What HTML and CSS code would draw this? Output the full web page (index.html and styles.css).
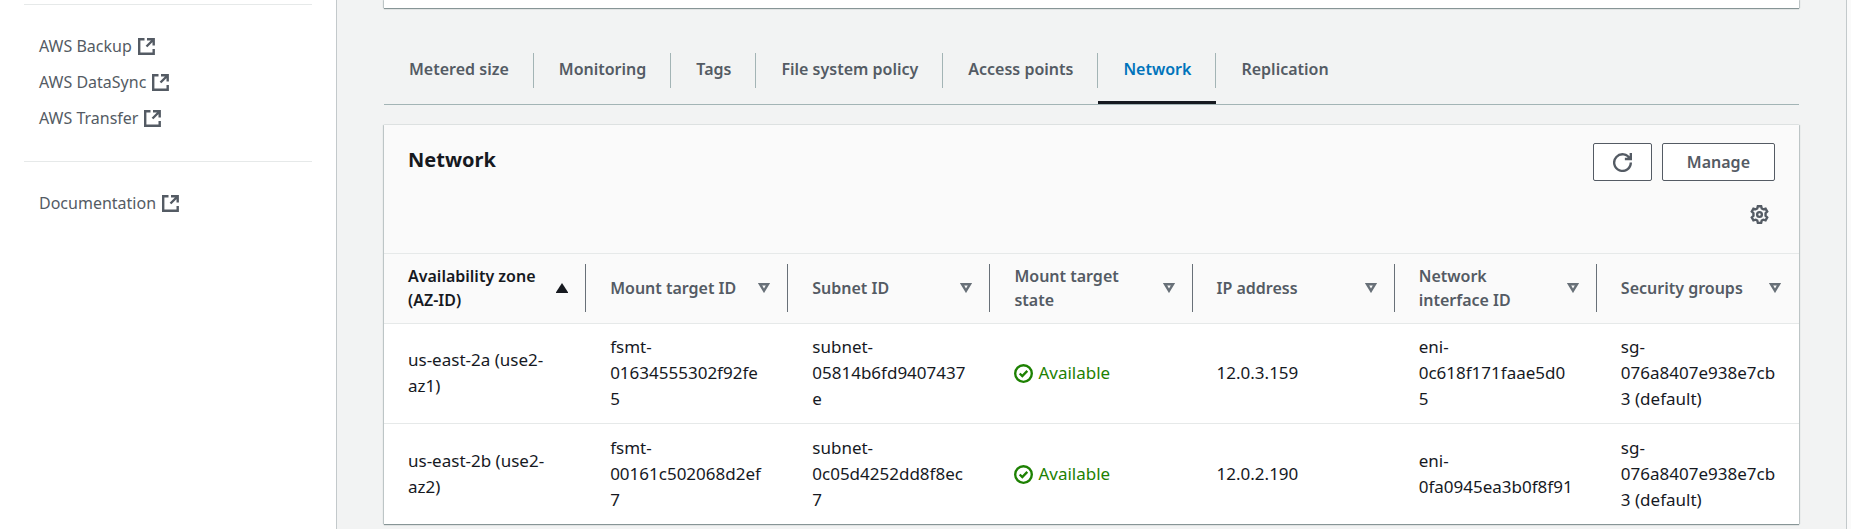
FILE: index.html
```html
<!DOCTYPE html>
<html lang="en">
<head>
<meta charset="utf-8">
<title>Network</title>
<link rel="stylesheet" href="styles.css">
</head>
<body>
<svg class="defs" aria-hidden="true">
  <symbol id="external" viewBox="0 0 17 17"><path d="M6.500 1.200H1.200v14.500h14.500V11M9 1.300h6.700v6.200M15.500 1.500L8.500 8.500"/></symbol>
  <symbol id="refresh" viewBox="0 0 16 16"><path d="M10 5h5V0M15 8a7 7 0 1 1-.7-3"/></symbol>
  <symbol id="gear" viewBox="0 0 16 16"><circle cx="8" cy="8" r="2"/><path d="M6.600 1h2.800l.5 1.900 1.300.700 1.900-.5 1.400 2.400L13.100 7v2l1.400 1.500-1.400 2.400-1.900-.5-1.300.700L9.400 15H6.600l-.5-1.900-1.300-.700-1.900.5-1.400-2.400L2.900 9V7L1.500 5.500l1.400-2.400 1.900.5 1.300-.700z"/></symbol>
  <symbol id="check" viewBox="0 0 16 16"><circle cx="8" cy="8" r="7"/><path d="M4.800 8l2.200 2.200 4.200-4.400"/></symbol>
  <symbol id="sort" viewBox="0 0 12 10"><path d="M2 1.200h8L6 7.800z"/></symbol>
  <symbol id="sorted" viewBox="0 0 12 10"><path d="M6 0l6 9.200v.8H0v-.8z"/></symbol>
</svg>
<div class="app">
  <nav class="sidebar" aria-label="Services">
    <ul class="links">
      <li><a href="#backup">AWS Backup <svg class="icon external"><use href="#external"/></svg></a></li>
      <li><a href="#datasync">AWS DataSync <svg class="icon external"><use href="#external"/></svg></a></li>
      <li><a href="#transfer">AWS Transfer <svg class="icon external"><use href="#external"/></svg></a></li>
    </ul>
    <ul class="links">
      <li><a href="#documentation">Documentation <svg class="icon external"><use href="#external"/></svg></a></li>
    </ul>
  </nav>
  <main class="content">
    <div class="card summary"></div>
    <div class="tabs" role="tablist">
      <button class="tab" role="tab">Metered size</button>
      <button class="tab" role="tab">Monitoring</button>
      <button class="tab" role="tab">Tags</button>
      <button class="tab" role="tab">File system policy</button>
      <button class="tab" role="tab">Access points</button>
      <button class="tab active" role="tab" aria-selected="true">Network</button>
      <button class="tab" role="tab">Replication</button>
    </div>
    <section class="card">
      <header class="card-header">
        <div class="title-row">
          <h2>Network</h2>
          <div class="actions">
            <button class="button" aria-label="Refresh"><svg class="icon refresh"><use href="#refresh"/></svg></button>
            <button class="button">Manage</button>
          </div>
        </div>
        <div class="preferences">
          <button class="icon-button" aria-label="Preferences"><svg class="icon gear"><use href="#gear"/></svg></button>
        </div>
      </header>
      <table>
        <thead>
          <tr>
            <th class="ascending" aria-sort="ascending"><div class="heading"><span>Availability zone (AZ-ID)</span><svg class="sort"><use href="#sorted"/></svg></div></th>
            <th><div class="heading"><span>Mount target ID</span><svg class="sort"><use href="#sort"/></svg></div></th>
            <th><div class="heading"><span>Subnet ID</span><svg class="sort"><use href="#sort"/></svg></div></th>
            <th><div class="heading"><span>Mount target state</span><svg class="sort"><use href="#sort"/></svg></div></th>
            <th><div class="heading"><span>IP address</span><svg class="sort"><use href="#sort"/></svg></div></th>
            <th><div class="heading"><span>Network interface ID</span><svg class="sort"><use href="#sort"/></svg></div></th>
            <th><div class="heading"><span>Security groups</span><svg class="sort"><use href="#sort"/></svg></div></th>
          </tr>
        </thead>
        <tbody>
          <tr>
            <td>us-east-2a (use2-az1)</td>
            <td>fsmt-01634555302f92fe5</td>
            <td>subnet-05814b6fd9407437e</td>
            <td><span class="status"><svg class="icon check"><use href="#check"/></svg>Available</span></td>
            <td>12.0.3.159</td>
            <td>eni-0c618f171faae5d05</td>
            <td>sg-076a8407e938e7cb3 (default)</td>
          </tr>
          <tr>
            <td>us-east-2b (use2-az2)</td>
            <td>fsmt-00161c502068d2ef7</td>
            <td>subnet-0c05d4252dd8f8ec7</td>
            <td><span class="status"><svg class="icon check"><use href="#check"/></svg>Available</span></td>
            <td>12.0.2.190</td>
            <td>eni-0fa0945ea3b0f8f91</td>
            <td>sg-076a8407e938e7cb3 (default)</td>
          </tr>
        </tbody>
      </table>
    </section>
  </main>
  <aside class="help"></aside>
</div>
</body>
</html>
```
FILE: styles.css
```css
* { box-sizing: border-box; }
body {
  margin: 0;
  background: #f2f3f3;
  color: #16191f;
  font: 17px/26px "Noto Sans", sans-serif;
}
button { font: inherit; cursor: pointer; }
.defs { display: none; }
.app { display: flex; min-height: 100vh; }

.sidebar {
  flex: 0 0 337px;
  padding: 4px 24px 0;
  background: #fff;
  border-right: 1px solid #c3c9cb;
}
.links {
  margin: 0;
  padding: 28px 15px 30px;
  list-style: none;
  border-top: 1px solid #e6e9e9;
}
.links li { height: 26px; margin-bottom: 10px; }
.links li:last-child { margin-bottom: 0; }
.links a {
  display: flex;
  align-items: center;
  gap: 6px;
  color: #545b64;
  font-size: 16px;
  text-decoration: none;
}

.icon { flex: none; fill: none; stroke: currentColor; stroke-width: 2; }
.external { width: 17px; height: 17px; stroke-width: 2.4; }

.content { flex: 1; min-width: 0; padding: 0 47px; }
.card {
  background: #fff;
  box-shadow: 0 1px 1px #879596, 1px 0 1px #c8cfd0, -1px 0 1px #c8cfd0, 0 -1px 0 #e6eaea;
}
.summary { height: 8px; }
.tabs {
  display: flex;
  height: 97px;
  padding-top: 45px;
  margin-bottom: 20px;
  border-bottom: 1px solid #a3b4b5;
}
.tab {
  display: flex;
  padding: 0 0 0 25px;
  border: 0;
  border-bottom: 3px solid transparent;
  background: none;
  color: #545b64;
  font-size: 16px;
  font-weight: 600;
  line-height: 32px;
}
.tab::after {
  content: "";
  align-self: flex-start;
  height: 35px;
  margin-left: 24px;
  border-right: 1px solid #a3b4b5;
}
.tab:last-child::after { display: none; }
.tab.active { color: #0073bb; border-bottom-color: #16191f; }

.card-header { padding: 18px 24px 19px; background: #fafafa; }
.title-row { display: flex; justify-content: space-between; }
h2 { margin: 0; font-size: 20px; font-weight: 700; line-height: 34px; }
.actions { display: flex; gap: 10px; }
.button {
  display: flex;
  align-items: center;
  height: 38px;
  padding: 0 24px;
  border: 1px solid #545b64;
  border-radius: 2px;
  background: #fff;
  color: #545b64;
  font-size: 16px;
  font-weight: 600;
  line-height: 24px;
}
.refresh { width: 19px; height: 19px; margin: 0 -5px; }
.preferences { display: flex; justify-content: flex-end; padding: 24px 6px 10px 0; }
.icon-button { display: flex; padding: 0; border: 0; background: none; color: #545b64; }
.gear { width: 19px; height: 19px; }

table { width: 100%; table-layout: fixed; border-collapse: collapse; }
th {
  padding: 10px 0 11px;
  border-top: 1px solid #e6e9e9;
  border-bottom: 1px solid #e6e9e9;
  background: #fafafa;
  color: #545b64;
  font-size: 16px;
  font-weight: 600;
  line-height: 24px;
  text-align: left;
}
.heading {
  display: flex;
  align-items: center;
  justify-content: space-between;
  gap: 12px;
  height: 48px;
  padding: 0 17px 0 24px;
  border-right: 1px solid #687078;
}
th:last-child .heading { border-right-color: transparent; }
.ascending { color: #16191f; }
.sort { flex: none; width: 12px; height: 10px; fill: none; stroke: #687078; stroke-width: 2.4; }
.ascending .sort { fill: #16191f; stroke: none; }
td {
  padding: 10px 22px 11px 24px;
  border-bottom: 1px solid #e6e9e9;
  overflow-wrap: break-word;
  vertical-align: middle;
}
tbody tr:last-child td { padding-top: 11px; border-bottom: 0; }
.status { display: flex; align-items: center; gap: 5px; color: #1d8102; }
.check { width: 19px; height: 19px; }

.help { flex: 0 0 5px; background: #fafafa; border-left: 1px solid #c3c9cb; }
```
